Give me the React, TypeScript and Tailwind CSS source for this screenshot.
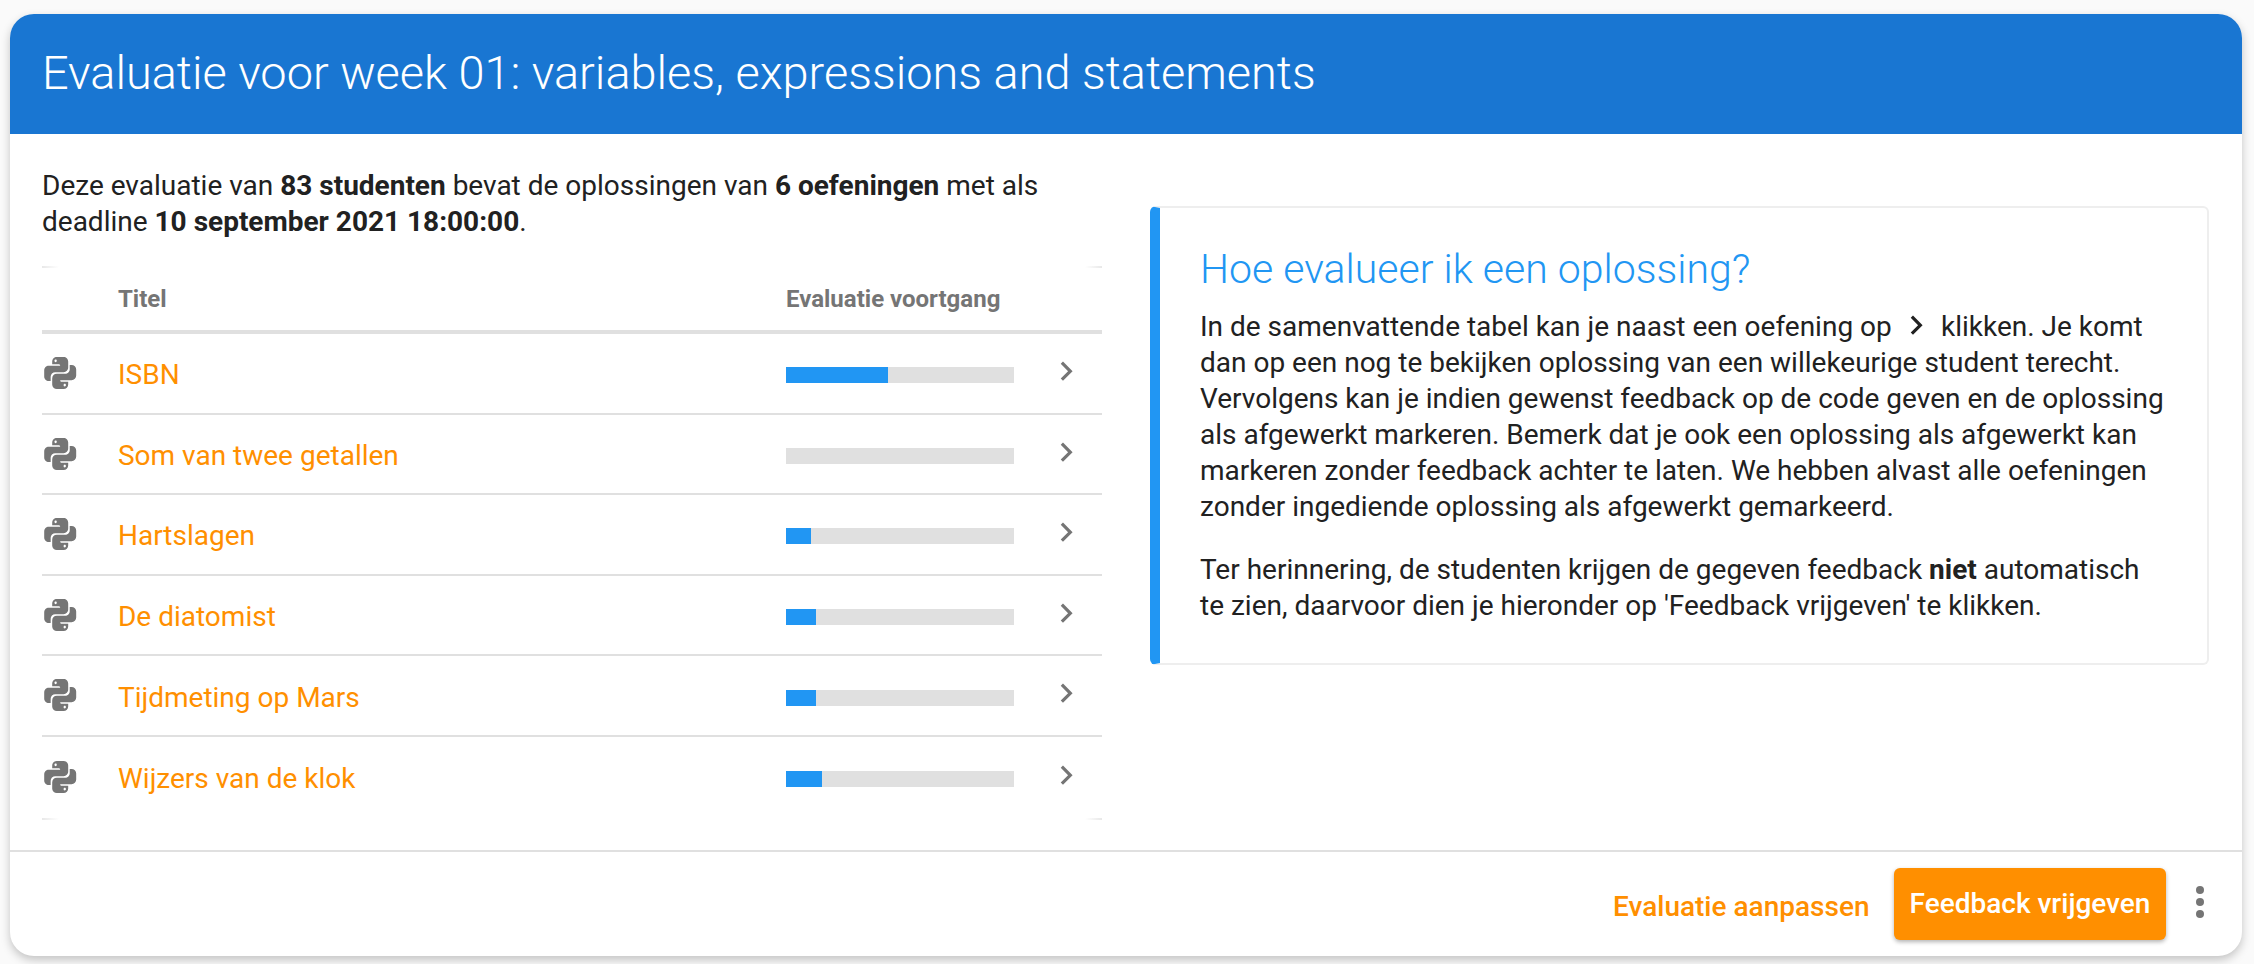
const PY = "M19.14,7.5A2.86,2.86 0 0,1 22,10.36V14.14A2.86,2.86 0 0,1 19.14,17H12C12,17.39 12.32,17.96 12.71,17.96H17V19.64A2.86,2.86 0 0,1 14.14,22.5H9.86A2.86,2.86 0 0,1 7,19.64V15.89C7,14.31 8.28,13.04 9.86,13.04H15.11C16.69,13.04 17.96,11.76 17.96,10.18V7.5H19.14M14.86,19.29C14.46,19.29 14.14,19.59 14.14,20.18C14.14,20.77 14.46,20.89 14.86,20.89A0.71,0.71 0 0,0 15.57,20.18C15.57,19.59 15.25,19.29 14.86,19.29M4.86,17.5C3.28,17.5 2,16.22 2,14.64V10.86C2,9.28 3.28,8 4.86,8H12C12,7.61 11.68,7.04 11.29,7.04H7V5.36C7,3.78 8.28,2.5 9.86,2.5H14.14C15.72,2.5 17,3.78 17,5.36V9.11C17,10.69 15.72,11.96 14.14,11.96H8.89C7.31,11.96 6.04,13.24 6.04,14.82V17.5H4.86M9.14,5.71C9.54,5.71 9.86,5.41 9.86,4.82C9.86,4.23 9.54,4.11 9.14,4.11C8.75,4.11 8.43,4.23 8.43,4.82C8.43,5.41 8.75,5.71 9.14,5.71Z";
const CHEV = "M8.59,16.58L13.17,12L8.59,7.41L10,6L16,12L10,18L8.59,16.58Z";

const rows = [
  { title: "ISBN", pct: 44.6 },
  { title: "Som van twee getallen", pct: 0 },
  { title: "Hartslagen", pct: 10.8 },
  { title: "De diatomist", pct: 13 },
  { title: "Tijdmeting op Mars", pct: 13 },
  { title: "Wijzers van de klok", pct: 15.8 },
];

function TableEdge() {
  return (
    <div className="flex h-[2px] justify-between">
      <span className="w-[17px] bg-gradient-to-r from-[#e8e8e8] to-transparent" />
      <span className="w-[17px] bg-gradient-to-l from-[#e8e8e8] to-transparent" />
    </div>
  );
}

export default function App() {
  return (
    <div className="min-h-[964px] bg-[#fafafa] pl-[10px] pt-[14px] font-['Roboto',sans-serif] text-[#212121]">
      <div className="flex h-[942px] w-[2232px] flex-col overflow-hidden rounded-[24px] bg-white shadow-[0_4px_10px_rgba(0,0,0,0.22)]">
        <div className="flex h-[120px] items-center bg-[#1976d2] pb-[2px] pl-[32px] text-[46.9px] font-light text-white">
          Evaluatie voor week 01: variables, expressions and statements
        </div>
        <div className="flex h-[716px] gap-[48px] px-[32px]">
          <div className="w-[1060px] pt-[34px]">
            <p className="h-[98px] text-[28px] leading-[36px]">
              Deze evaluatie van <b>83 studenten</b> bevat de oplossingen van <b>6 oefeningen</b> met als deadline{" "}
              <b>10 september 2021 18:00:00</b>.
            </p>
            <TableEdge />
            <div className="flex h-[66px] items-center border-b-4 border-[#e0e0e0] text-[24px] font-bold text-[#757575]">
              <span className="ml-[76px] w-[668px]">Titel</span>
              <span>Evaluatie voortgang</span>
            </div>
            {rows.map((r, i) => (
              <div
                key={r.title}
                className={`flex h-[80.6px] items-center ${i < rows.length - 1 ? "border-b-2 border-[#e0e0e0]" : ""}`}
              >
                <svg viewBox="0 0 24 24" className="ml-[-1px] mt-[-2px] h-[38.4px] w-[38.4px] shrink-0 fill-[#757575]">
                  <path d={PY} />
                </svg>
                <span className="ml-[38.6px] mt-[4px] w-[668px] text-[28px] text-[#ff8f00]">{r.title}</span>
                <div className="mt-[4px] h-[16px] w-[228px] bg-[#e0e0e0]">
                  <div className="h-full bg-[#2196f3]" style={{ width: `${r.pct}%` }} />
                </div>
                <svg viewBox="0 0 24 24" className="ml-[33px] mt-[-4px] h-[38.4px] w-[38.4px] fill-[#757575]">
                  <path d={CHEV} />
                </svg>
              </div>
            ))}
            <TableEdge />
          </div>
          <div className="mt-[72px] h-[459px] w-[1059px] rounded-[6px] border-2 border-l-[10px] border-[#eeeeee] border-l-[#2196f3] pl-[40px] pr-[38px] pt-[37px]">
            <h2 className="text-[41px] font-light leading-[48px] text-[#2196f3]">Hoe evalueer ik een oplossing?</h2>
            <p className="mt-[16px] text-[28px] leading-[36px]">
              In de samenvattende tabel kan je naast een oefening op{" "}
              <svg viewBox="0 0 24 24" className="my-[-12px] ml-[-2px] mr-[-1px] inline h-[38.4px] w-[38.4px] fill-[#212121] align-[4px]">
                <path d={CHEV} />
              </svg>{" "}
              klikken. Je komt dan op een nog te bekijken oplossing van een willekeurige student terecht. Vervolgens kan
              je indien gewenst feedback op de code geven en de oplossing als afgewerkt markeren. Bemerk dat je ook een
              oplossing als afgewerkt kan markeren zonder feedback achter te laten. We hebben alvast alle oefeningen
              zonder ingediende oplossing als afgewerkt gemarkeerd.
            </p>
            <p className="mt-[27px] text-[28px] leading-[36px]">
              Ter herinnering, de studenten krijgen de gegeven feedback <b>niet</b> automatisch te zien, daarvoor dien je
              hieronder op 'Feedback vrijgeven' te klikken.
            </p>
          </div>
        </div>
        <div className="flex h-[106px] items-start border-t-2 border-[#e0e0e0] pl-[1603px] pt-[16px]">
          <span className="mt-[18px] w-[281px] text-[28px] font-medium text-[#ff8f00]">Evaluatie aanpassen</span>
          <button className="h-[72px] w-[272px] rounded-[6px] bg-[#ff8f00] text-[28px] font-medium text-white shadow-[0_2px_4px_rgba(0,0,0,0.3)]">
            Feedback vrijgeven
          </button>
          <div className="ml-[30px] mt-[18px] flex flex-col gap-[4px]">
            <span className="h-[8px] w-[8px] rounded-full bg-[#757575]" />
            <span className="h-[8px] w-[8px] rounded-full bg-[#757575]" />
            <span className="h-[8px] w-[8px] rounded-full bg-[#757575]" />
          </div>
        </div>
      </div>
    </div>
  );
}
